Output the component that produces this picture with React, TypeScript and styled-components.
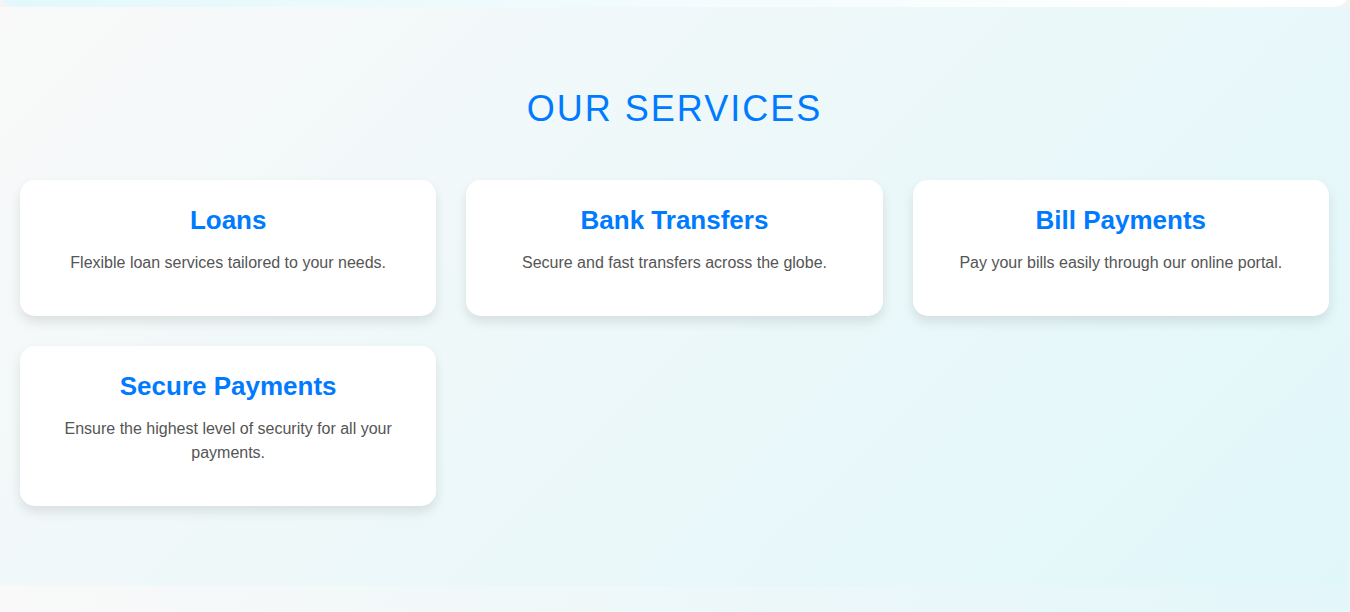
import React from "react";
import styled, { createGlobalStyle } from "styled-components";

const GlobalStyle = createGlobalStyle`
  * { box-sizing: border-box; margin: 0; padding: 0; }
  body {
    font-family: "Liberation Sans", Arial, sans-serif;
    color: #333;
    line-height: 24px;
    background: #f4f4f4;
  }
`;

const Page = styled.div`
  display: flex;
  flex-direction: column;
  min-height: 100vh;
  padding-right: 1px;
`;

const HeroWindow = styled.div`
  display: flex;
  align-items: flex-end;
  height: 7px;
  overflow: hidden;
`;

const Hero = styled.div`
  flex: 1;
  flex-shrink: 0;
  height: 60px;
  border-radius: 15px;
  background: linear-gradient(90deg, #e3f8fc, #ffffff 90%);
`;

const Services = styled.section`
  padding: 80px 20px;
  text-align: center;
  background: linear-gradient(135deg, #f9f9f9, #e0f7fa);
`;

const NextSection = styled.section`
  flex: 1;
  background: linear-gradient(120deg, #f9f9f9, #e3f6fa);
`;

const Title = styled.h2`
  margin-bottom: 50px;
  font-size: 36px;
  font-weight: 400;
  line-height: 43px;
  letter-spacing: 2px;
  text-transform: uppercase;
  color: #007bff;
`;

const Grid = styled.div`
  display: grid;
  grid-template-columns: repeat(auto-fit, minmax(350px, 1fr));
  gap: 30px;
`;

const Card = styled.article`
  padding: 20px 30px 41px;
  border-radius: 15px;
  background: #fff;
  box-shadow: 0 6px 12px rgba(0, 0, 0, 0.1);
`;

const CardTitle = styled.h3`
  margin-bottom: 11px;
  font-size: 26px;
  line-height: 40px;
  color: #007bff;
`;

const CardText = styled.p`
  font-size: 16px;
  color: #555;
`;

const services = [
  { name: "Loans", text: "Flexible loan services tailored to your needs." },
  { name: "Bank Transfers", text: "Secure and fast transfers across the globe." },
  { name: "Bill Payments", text: "Pay your bills easily through our online portal." },
  { name: "Secure Payments", text: "Ensure the highest level of security for all your payments." },
];

export default function App() {
  return (
    <Page>
      <GlobalStyle />
      <HeroWindow>
        <Hero />
      </HeroWindow>
      <Services>
        <Title>Our Services</Title>
        <Grid>
          {services.map((s) => (
            <Card key={s.name}>
              <CardTitle>{s.name}</CardTitle>
              <CardText>{s.text}</CardText>
            </Card>
          ))}
        </Grid>
      </Services>
      <NextSection />
    </Page>
  );
}
